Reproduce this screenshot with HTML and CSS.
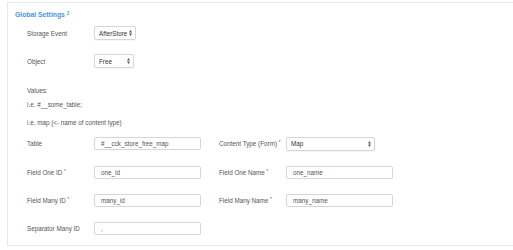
FILE: index.html
```html
<!DOCTYPE html>
<html>
<head>
    <title>Global Settings</title>
    <link rel="stylesheet" href="styles.css">
</head>
<body>
    <div class="panel">
        <div class="legend">Global Settings <sup>2</sup></div>

        <div class="row">
            <div class="col">
                <label>Storage Event</label>
                <div class="select sel-event">AfterStore
                    <svg class="arrows" width="3" height="6" viewBox="0 0 3 6"><path d="M1.5 0L3 2.4H0ZM1.5 6L3 3.6H0Z" fill="#555"/></svg>
                </div>
            </div>
        </div>

        <div class="row">
            <div class="col">
                <label>Object</label>
                <div class="select sel-object">Free
                    <svg class="arrows" width="3" height="6" viewBox="0 0 3 6"><path d="M1.5 0L3 2.4H0ZM1.5 6L3 3.6H0Z" fill="#555"/></svg>
                </div>
            </div>
        </div>

        <div class="note values">Values:</div>
        <div class="note">i.e. #__some_table;</div>
        <div class="note spaced">i.e. map (&lt;- name of content type)</div>

        <div class="row">
            <div class="col">
                <label>Table</label>
                <div class="input">#__cck_store_free_map</div>
            </div>
            <div class="col">
                <label>Content Type (Form) <sup>*</sup></label>
                <div class="select sel-type">Map
                    <svg class="arrows" width="3" height="6" viewBox="0 0 3 6"><path d="M1.5 0L3 2.4H0ZM1.5 6L3 3.6H0Z" fill="#555"/></svg>
                </div>
            </div>
        </div>

        <div class="row">
            <div class="col">
                <label>Field One ID <sup>*</sup></label>
                <div class="input">one_id</div>
            </div>
            <div class="col">
                <label>Field One Name <sup>*</sup></label>
                <div class="input">one_name</div>
            </div>
        </div>

        <div class="row">
            <div class="col">
                <label>Field Many ID <sup>*</sup></label>
                <div class="input">many_id</div>
            </div>
            <div class="col">
                <label>Field Many Name <sup>*</sup></label>
                <div class="input">many_name</div>
            </div>
        </div>

        <div class="row">
            <div class="col">
                <label>Separator Many ID</label>
                <div class="input">,</div>
            </div>
        </div>
    </div>
</body>
</html>
```
FILE: styles.css
```css
body, html {
    margin: 0;
    background: #fff;
    font-family: "Liberation Sans", Arial, sans-serif;
    font-size: 6.3px;
    color: #555;
}

.panel {
    margin: 2px 0 0 7px;
    height: 244px;
    box-sizing: border-box;
    border: 1px solid #e8e8e8;
    border-right: none;
    padding: 8px 0 0 7px;
}

.legend {
    color: #4a94e0;
    font-weight: bold;
    font-size: 6.8px;
    height: 8px;
    line-height: 8px;
}

sup {
    font-size: 4.5px;
    vertical-align: 2px;
    line-height: 0;
}

.row {
    display: flex;
    align-items: center;
    height: 28.3px;
    padding-left: 12px;
}

.col {
    display: flex;
    align-items: center;
    width: 192px;
}

label {
    width: 67px;
    flex-shrink: 0;
}

.select {
    display: flex;
    align-items: center;
    justify-content: space-between;
    height: 14px;
    box-sizing: border-box;
    border: 1px solid #d6d6d6;
    border-radius: 2px;
    padding: 0 3px 0 4px;
    color: #333;
    background: #fff;
    box-shadow: 0 1px 1px rgba(0, 0, 0, 0.04);
}

.sel-event { width: 42px; }
.sel-object { width: 40px; }
.sel-type { width: 89px; }

.arrows {
    display: block;
}

.input {
    width: 107px;
    height: 13px;
    box-sizing: border-box;
    border: 1px solid #d6d6d6;
    border-radius: 2px;
    padding: 0 6px;
    line-height: 11px;
    color: #555;
}

.note {
    padding-left: 12px;
    height: 14px;
    line-height: 14px;
}

.note.values {
    margin-top: 8px;
}

.note.spaced {
    margin-top: 4px;
}
```
